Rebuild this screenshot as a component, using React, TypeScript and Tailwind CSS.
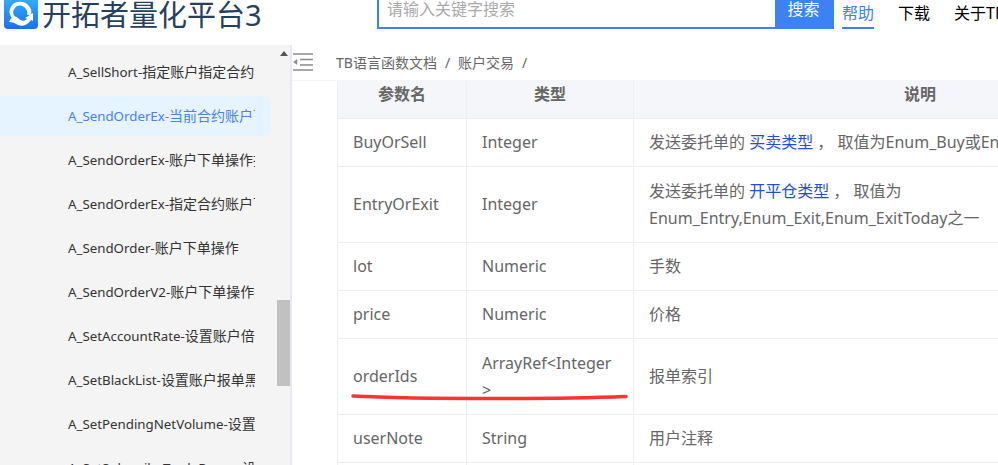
const FONT = "font-['Noto_Sans','Noto_Sans_CJK_SC',sans-serif]"

const MENU = [
  ['A_SellShort-', '指定账户指定合约卖空操作'],
  ['A_SendOrderEx-', '当前合约账户下单操作'],
  ['A_SendOrderEx-', '账户下单操作扩展'],
  ['A_SendOrderEx-', '指定合约账户下单操作'],
  ['A_SendOrder-', '账户下单操作'],
  ['A_SendOrderV2-', '账户下单操作扩展'],
  ['A_SetAccountRate-', '设置账户倍率'],
  ['A_SetBlackList-', '设置账户报单黑名单'],
  ['A_SetPendingNetVolume-', '设置账户净持仓'],
  ['A_SetSubscribeTradeRange-', '设置账户'],
]

function Logo() {
  return (
    <svg width="34" height="29" viewBox="0 0 34 29" className="shrink-0">
      <defs>
        <linearGradient id="logoBg" x1="0" y1="0" x2="0" y2="1">
          <stop offset="0" stopColor="#35b4fb" />
          <stop offset="1" stopColor="#1a6ff5" />
        </linearGradient>
      </defs>
      <rect x="0" y="-5" width="34" height="34" rx="4" fill="url(#logoBg)" />
      {/* ring of the Q */}
      <path d="M10 20C5 16 4 10 8 5c4-4 11-4 15-1 4 3 5 7 4 11l-4 0c1-3 0-6-3-8-3-2-7-2-9 1-3 3-2 7 1 10z" fill="#fff" />
      {/* swoosh with arrow */}
      <path d="M5 22c2-5 6-7 9-4 3 3 6 4 9 1l-2-1 8-5 0 8-2-1c-3 5-9 7-13 5-3-2-6-3-9-3z" fill="#fff" />
    </svg>
  )
}

function Header() {
  return (
    <div className="flex h-[45px] shrink-0 items-end bg-white pb-[16px]">
      <div className="ml-[4px] flex w-[373px] shrink-0 items-end gap-[4px]">
        <Logo />
        <span className="text-[29px] leading-[29px] whitespace-nowrap text-[#27405f]">开拓者量化平台3</span>
      </div>
      <div className="flex h-[40px] w-[457px] shrink-0 border-2 border-[#3d82f4]">
        <div className="flex-1 pl-[8px] text-[16px] leading-[36px] text-[#a9a9a9]">请输入关键字搜索</div>
        <div className="w-[57px] bg-[#3d82f4] text-center text-[16px] leading-[36px] text-white">搜索</div>
      </div>
      <div className="ml-[8px] w-[32px] shrink-0 border-b-[2px] border-[#3d82f4] pb-[3px] text-[16px] leading-[22px] whitespace-nowrap text-[#3d82f4]">
        帮助
      </div>
      <div className="ml-[24px] shrink-0 pb-[5px] text-[16px] leading-[22px] whitespace-nowrap text-black">下载</div>
      <div className="ml-[24px] shrink-0 pb-[5px] text-[16px] leading-[22px] whitespace-nowrap text-black">关于TB</div>
    </div>
  )
}

function Sidebar() {
  return (
    <div className="relative w-[292px] shrink-0 overflow-hidden border-r-2 border-[#e8e8f0] bg-[#f4f4f4] pt-[7px]">
      {MENU.map(([name, desc], i) => (
        <div
          key={name + desc}
          className={
            i === 1
              ? 'mb-[4px] flex h-[40px] w-[271px] items-center rounded-r-lg bg-[#e6f4ff] pl-[68px] text-[#4a80f0]'
              : 'mb-[4px] flex h-[40px] w-[271px] items-center pl-[68px] text-[#333]'
          }
        >
          <div className="w-[187px] overflow-hidden text-[14px] whitespace-nowrap">
            <span className="text-[13.3px]">{name}</span>
            {desc}
          </div>
        </div>
      ))}
      {/* scrollbar */}
      <div className="absolute top-0 right-0 bottom-0 w-[13px]">
        <div className="mx-auto mt-[6px] h-0 w-0 border-x-[4px] border-b-[5px] border-x-transparent border-b-[#555]" />
        <div className="absolute top-[255px] h-[86px] w-[13px] bg-[#c1c1c1]" />
      </div>
    </div>
  )
}

function Cell({ children, head }: { children: React.ReactNode; head?: boolean }) {
  return (
    <td
      className={
        head
          ? 'border border-[#eee] px-[15px] text-center text-[16px] leading-[27px] font-bold text-[#666]'
          : 'border border-[#eee] px-[15px] text-[16px] leading-[27px] text-[#666]'
      }
    >
      {children}
    </td>
  )
}

function Link({ children }: { children: React.ReactNode }) {
  return <span className="text-[#1d4fd8]">{children}</span>
}

function ParamTable() {
  return (
    <div className="relative flex-1 overflow-hidden pl-[45px]">
      {/* table is scrolled: the top of the head row sits under the breadcrumb bar */}
      <table className="mt-[-11px] w-[870px] table-fixed border-collapse">
        <colgroup>
          <col className="w-[129px]" />
          <col className="w-[167px]" />
          <col />
        </colgroup>
        <tbody>
          <tr className="h-[48px] bg-[#f5f6f9]">
            <Cell head>参数名</Cell>
            <Cell head>类型</Cell>
            <Cell head>说明</Cell>
          </tr>
          <tr className="h-[48px]">
            <Cell>BuyOrSell</Cell>
            <Cell>Integer</Cell>
            <Cell>
              <span className="whitespace-nowrap">
                发送委托单的 <Link>买卖类型</Link> ， 取值为Enum_Buy或Enum_Sell之一
              </span>
            </Cell>
          </tr>
          <tr className="h-[76px]">
            <Cell>EntryOrExit</Cell>
            <Cell>Integer</Cell>
            <Cell>
              发送委托单的 <Link>开平仓类型</Link> ， 取值为
              <br />
              Enum_Entry,Enum_Exit,Enum_ExitToday之一
            </Cell>
          </tr>
          <tr className="h-[48px]">
            <Cell>lot</Cell>
            <Cell>Numeric</Cell>
            <Cell>手数</Cell>
          </tr>
          <tr className="h-[48px]">
            <Cell>price</Cell>
            <Cell>Numeric</Cell>
            <Cell>价格</Cell>
          </tr>
          <tr className="h-[76px]">
            <Cell>orderIds</Cell>
            <Cell>
              <span className="whitespace-nowrap">ArrayRef&lt;Integer</span>
              <br />
              &gt;
            </Cell>
            <Cell>报单索引</Cell>
          </tr>
          <tr className="h-[48px]">
            <Cell>userNote</Cell>
            <Cell>String</Cell>
            <Cell>用户注释</Cell>
          </tr>
          <tr className="h-[48px]">
            <Cell>{''}</Cell>
            <Cell>{''}</Cell>
            <Cell>{''}</Cell>
          </tr>
        </tbody>
      </table>
      {/* red hand-drawn underline */}
      <svg width="290" height="10" viewBox="0 0 290 10" className="absolute top-[311px] left-[58px]">
        <path d="M3 4C40 6 90 6.500 150 6.500S250 5.500 276 4.500" fill="none" stroke="#f33" strokeWidth="3.500" strokeLinecap="round" />
      </svg>
    </div>
  )
}

export default function App() {
  return (
    <div className={`flex h-[465px] w-[998px] flex-col overflow-hidden bg-white ${FONT}`}>
      <Header />
      <div className="flex min-h-0 flex-1">
        <Sidebar />
        <div className="flex min-w-0 flex-1 flex-col">
          <div className="flex h-[36px] shrink-0 items-center border-b border-[#f5f5f5] pl-[1px]">
            <svg width="20" height="18" viewBox="0 0 20 18" className="mt-[-1px] shrink-0" stroke="#8a8a8a" strokeWidth="1.500" fill="none">
              <path d="M0 1H20M7 6.500H20M7 12H20M0 17H20" />
              <path d="M0.500 9L4 6.500V11.500Z" fill="#8a8a8a" strokeWidth="0.500" />
            </svg>
            <div className="ml-[23px] flex gap-[8px] text-[14px] text-[#666]">
              <span>TB语言函数文档</span>
              <span>/</span>
              <span>账户交易</span>
              <span>/</span>
            </div>
          </div>
          <ParamTable />
        </div>
      </div>
    </div>
  )
}
